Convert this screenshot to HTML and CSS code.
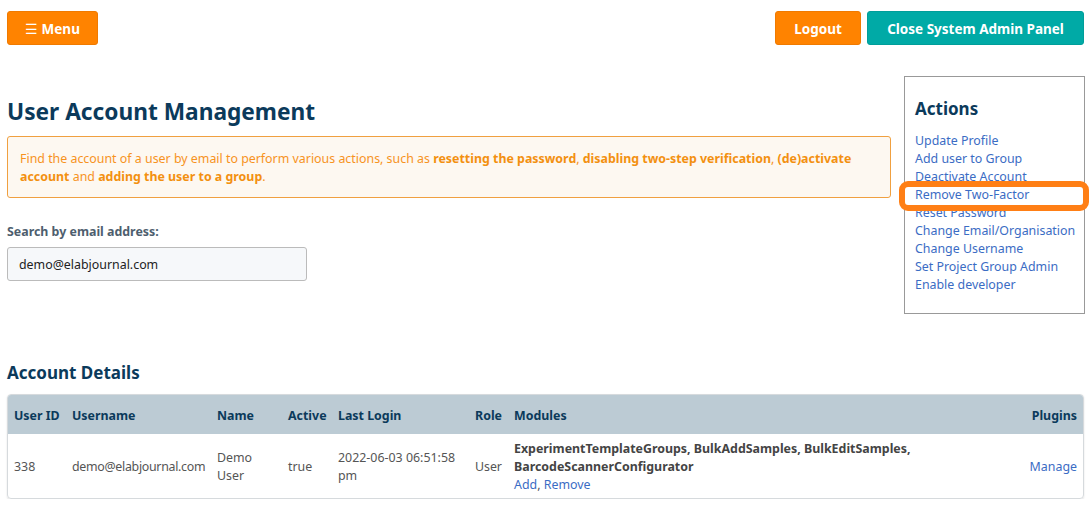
FILE: index.html
```html
<!DOCTYPE html>
<html lang="en">
<head>
<meta charset="utf-8">
<title>User Account Management</title>
<link rel="stylesheet" href="styles.css">
</head>
<body>
<div class="page">
  <header class="topbar">
    <button class="btn btn-orange btn-menu"><span class="burger">&#9776;</span> Menu</button>
    <div class="top-right">
      <button class="btn btn-orange btn-logout">Logout</button>
      <button class="btn btn-teal btn-close">Close System Admin Panel</button>
    </div>
  </header>

  <div class="main">
    <section class="left">
      <h1 class="title">User Account Management</h1>
      <div class="info">
        Find the account of a user by email to perform various actions, such as <b>resetting the password</b>, <b>disabling two-step verification</b>, <b>(de)activate</b> <b>account</b> and <b>adding the user to a group</b>.
      </div>
      <label class="label">Search by email address:</label>
      <input class="input" type="text" value="demo@elabjournal.com">
    </section>
    <aside class="actions">
      <h2 class="actions-title">Actions</h2>
      <ul class="action-list">
        <li><a href="#">Update Profile</a></li>
        <li><a href="#">Add user to Group</a></li>
        <li><a href="#">Deactivate Account</a></li>
        <li><a href="#">Remove Two-Factor</a></li>
        <li><a href="#">Reset Password</a></li>
        <li><a href="#">Change Email/Organisation</a></li>
        <li><a href="#">Change Username</a></li>
        <li><a href="#">Set Project Group Admin</a></li>
        <li><a href="#">Enable developer</a></li>
      </ul>
      <div class="highlight"></div>
    </aside>
  </div>

  <h2 class="section-title">Account Details</h2>
  <div class="table-wrap">
    <table class="table">
      <thead>
        <tr>
          <th class="c1">User ID</th>
          <th class="c2">Username</th>
          <th class="c3">Name</th>
          <th class="c4">Active</th>
          <th class="c5">Last Login</th>
          <th class="c6 right">Role</th>
          <th class="c7">Modules</th>
          <th class="c8 right">Plugins</th>
        </tr>
      </thead>
      <tbody>
        <tr>
          <td>338</td>
          <td class="email">demo@elabjournal.com</td>
          <td>Demo User</td>
          <td>true</td>
          <td>2022-06-03 06:51:58 pm</td>
          <td class="right">User</td>
          <td><b class="mods">ExperimentTemplateGroups, BulkAddSamples, BulkEditSamples,</b> <b class="mods">BarcodeScannerConfigurator</b><br><a href="#">Add</a>, <a href="#">Remove</a></td>
          <td class="right"><a href="#">Manage</a></td>
        </tr>
      </tbody>
    </table>
  </div>
</div>
</body>
</html>
```

FILE: styles.css
```css
* { box-sizing: border-box; }
html, body { margin: 0; padding: 0; background: #fff; }
body {
  font-family: "Noto Sans", "Open Sans", "Liberation Sans", sans-serif;
  font-size: 12.4px;
  line-height: 18px;
  color: #444;
}
.page { padding: 11px 6px 0 7px; }

.topbar { display: flex; justify-content: space-between; align-items: flex-start; }
.top-right { display: flex; gap: 6px; }
.btn {
  height: 34px;
  border: 1px solid transparent;
  border-radius: 3px;
  color: #fff;
  font-family: inherit;
  font-weight: bold;
  font-size: 13.5px;
  padding: 2px 0 0;
  cursor: pointer;
}
.btn-orange { background: #ff8300; border-color: #f07a00; }
.btn-teal { background: #00aaa6; border-color: #009e9a; }
.btn-menu { width: 91px; }
.burger { font-weight: normal; }
.btn-logout { width: 86px; }
.btn-close { width: 217px; }

.main { display: flex; gap: 13px; margin-top: 31px; }
.left { flex: 1; }
.title {
  margin: 21px 0 0;
  font-size: 22.7px;
  line-height: 30px;
  color: #0b3a5b;
  font-weight: bold;
}
.info {
  margin-top: 9px;
  background: #fdf8f1;
  border: 1px solid #f0a040;
  border-radius: 3px;
  padding: 13px 12px 11px;
  color: #f7931e;
}
.info b { color: #f39010; }
.label {
  display: block;
  margin-top: 25px;
  font-weight: bold;
  color: #4e5e6e;
}
.input {
  display: block;
  margin-top: 6px;
  width: 300px;
  height: 34px;
  border: 1px solid #bbb;
  border-radius: 3px;
  background: #f6f8fa;
  padding: 0 11px;
  font-family: inherit;
  font-size: 12.4px;
  color: #222;
}

.actions {
  position: relative;
  width: 181px;
  border: 1px solid #999;
  padding: 20px 6px 19px 10px;
  margin-right: -1px;
}
.actions-title {
  margin: 0;
  font-size: 17px;
  line-height: 24px;
  color: #0b3a5b;
}
.action-list { list-style: none; margin: 11px 0 0; padding: 0; white-space: nowrap; }
a { color: #3b6cc4; text-decoration: none; }
.highlight {
  position: absolute;
  left: -6px;
  top: 104px;
  width: 190px;
  height: 30px;
  border: 6px solid #ff7f15;
  border-radius: 9px;
}

.section-title {
  margin: 47px 0 0;
  font-size: 17px;
  line-height: 24px;
  color: #0b3a5b;
}
.table-wrap {
  margin-top: 9px;
  border: 1px solid #d6dadd;
  border-radius: 4px;
  overflow: hidden;
  box-shadow: 0 1px 2px rgba(0,0,0,0.12);
}
.table { width: 100%; border-collapse: collapse; table-layout: fixed; }
.table th {
  background: #bccbd4;
  color: #0b3a5b;
  text-align: left;
  font-weight: bold;
  white-space: nowrap;
  padding: 12px 6px 9px;
}
.table td { padding: 6px 6px 4px; vertical-align: middle; color: #555; }
.table .right { text-align: right; }
.table .email { letter-spacing: -0.3px; }
.mods { color: #444; }
.c1 { width: 58px; }
.c2 { width: 145px; }
.c3 { width: 71px; }
.c4 { width: 50px; }
.c5 { width: 135px; }
.c6 { width: 41px; }
.c8 { width: 65px; }
```
